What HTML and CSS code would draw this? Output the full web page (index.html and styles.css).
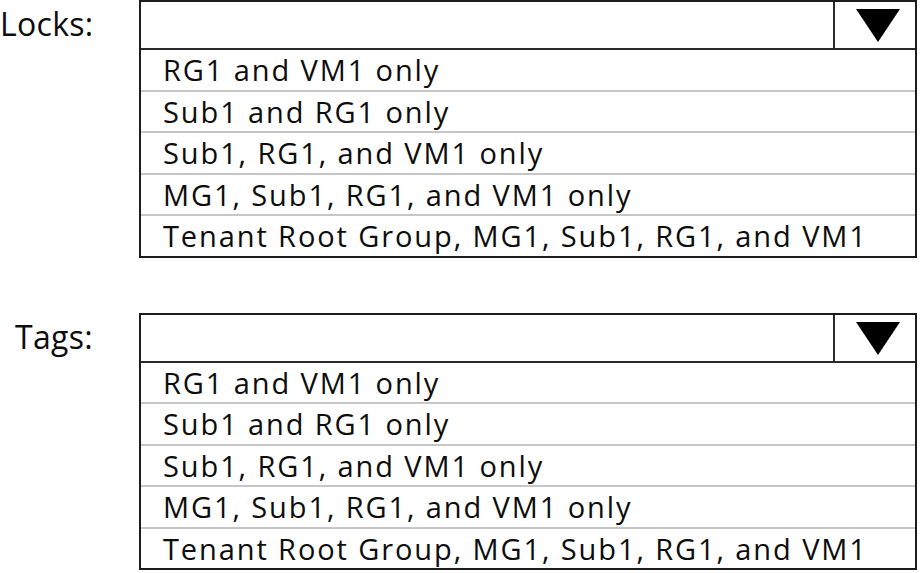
FILE: index.html
```html
<!DOCTYPE html>
<html lang="en">
<head>
    <meta charset="UTF-8">
    <title>Locks and Tags</title>
    <link rel="stylesheet" href="styles.css">
</head>
<body>

<!-- Locks -->
<div class="field">
    <div class="field-label">Locks:</div>
    <div class="select-box">
        <div class="select-head">
            <div class="select-value"></div>
            <div class="select-arrow">
                <svg width="44" height="33" viewBox="0 0 44 33"><polygon points="0,0 44,0 22,33" fill="#000"/></svg>
            </div>
        </div>
        <div class="option">RG1 and VM1 only</div>
        <div class="option">Sub1 and RG1 only</div>
        <div class="option">Sub1, RG1, and VM1 only</div>
        <div class="option">MG1, Sub1, RG1, and VM1 only</div>
        <div class="option">Tenant Root Group, MG1, Sub1, RG1, and VM1</div>
    </div>
</div>

<!-- Tags -->
<div class="field field-second">
    <div class="field-label field-label-indent">Tags:</div>
    <div class="select-box">
        <div class="select-head">
            <div class="select-value"></div>
            <div class="select-arrow">
                <svg width="44" height="33" viewBox="0 0 44 33"><polygon points="0,0 44,0 22,33" fill="#000"/></svg>
            </div>
        </div>
        <div class="option">RG1 and VM1 only</div>
        <div class="option">Sub1 and RG1 only</div>
        <div class="option">Sub1, RG1, and VM1 only</div>
        <div class="option">MG1, Sub1, RG1, and VM1 only</div>
        <div class="option">Tenant Root Group, MG1, Sub1, RG1, and VM1</div>
    </div>
</div>

</body>
</html>
```

FILE: styles.css
```css
body {
    margin: 0;
    background-color: #fff;
    color: #0d0d0d;
    font-family: "Open Sans", sans-serif;
}

.field {
    display: flex;
    align-items: flex-start;
}

.field-second {
    margin-top: 55px;
}

.field-label {
    width: 139px;
    height: 48px;
    display: flex;
    align-items: center;
    font-size: 32px;
    line-height: 1;
    letter-spacing: 0.3px;
    box-sizing: border-box;
}

.field-label-indent {
    padding-left: 15px;
}

/* Dropdown box */
.select-box {
    width: 778px;
    border: 2px solid #1c1c1c;
    box-sizing: border-box;
}

.select-head {
    display: flex;
    height: 46px;
    border-bottom: 2px solid #2a2a2a;
}

.select-value {
    flex: 1;
}

.select-arrow {
    width: 82px;
    border-left: 2px solid #2a2a2a;
    display: flex;
    justify-content: center;
    align-items: flex-start;
    padding-top: 7px;
    padding-left: 6px;
    box-sizing: border-box;
}

.option {
    height: 39.5px;
    display: flex;
    align-items: center;
    padding-left: 22px;
    font-size: 29px;
    line-height: 1;
    letter-spacing: 1.9px;
    border-bottom: 2px solid #c6c6c6;
}

.option:last-child {
    border-bottom: none;
}
```
